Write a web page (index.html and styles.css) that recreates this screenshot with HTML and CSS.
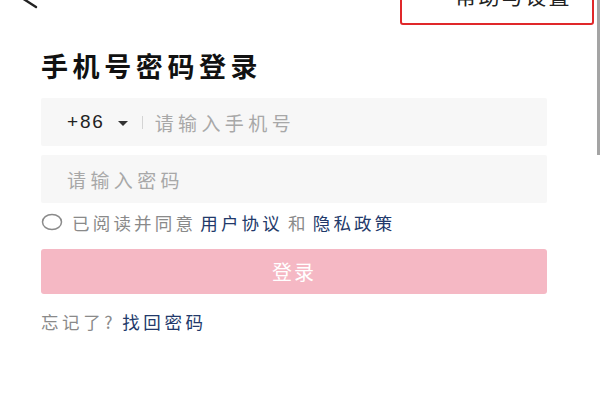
FILE: index.html
```html
<!DOCTYPE html>
<html lang="zh-CN">
<head>
    <meta charset="UTF-8">
    <meta name="viewport" content="width=device-width, initial-scale=1.0">
    <title>手机号密码登录</title>
    <link rel="stylesheet" href="styles.css">
</head>
<body>

<header class="top-bar">
    <!-- back arrow, mostly above the fold -->
    <svg class="back" width="20" height="30" viewBox="0 0 20 30">
        <polyline points="17,10 3,19 17,28" fill="none" stroke="#222" stroke-width="2.4" stroke-linecap="round" stroke-linejoin="round"/>
    </svg>
    <div class="help-box">帮助与设置</div>
</header>

<main class="login">
    <h1 class="title">手机号密码登录</h1>

    <div class="field">
        <span class="area-code">+86</span>
        <span class="caret"></span>
        <span class="divider"></span>
        <span class="placeholder">请输入手机号</span>
    </div>

    <div class="field">
        <span class="placeholder">请输入密码</span>
    </div>

    <div class="agree">
        <svg class="check" width="22" height="18" viewBox="0 0 22 18">
            <ellipse cx="11" cy="9" rx="9.5" ry="7.5" fill="none" stroke="#8a8a8a" stroke-width="1.5"/>
        </svg>
        <span class="muted">已阅读并同意</span>
        <a href="#" class="link">用户协议</a>
        <span class="muted">和</span>
        <a href="#" class="link">隐私政策</a>
    </div>

    <button class="login-btn">登录</button>

    <div class="forgot">
        <span class="muted">忘记了?</span>
        <a href="#" class="link">找回密码</a>
    </div>
</main>

<div class="scroll-thumb"></div>

</body>
</html>
```

FILE: styles.css
```css
body {
    margin: 0;
    background-color: #fff;
    font-family: "Noto Sans CJK SC", "Noto Sans", sans-serif;
    color: #111;
    overflow: hidden;
}
.top-bar {
    display: flex;
    justify-content: space-between;
    align-items: flex-start;
    height: 46px;
    margin-top: -21px;
    padding: 0 6px 0 19px;
}
.help-box {
    box-sizing: border-box;
    width: 194px;
    height: 46px;
    border: 2px solid #e0282a;
    border-radius: 3px;
    padding: 4px 20px 0 0;
    text-align: right;
    font-size: 21px;
    line-height: 21px;
    letter-spacing: 2.4px;
    color: #222;
}
.login {
    padding: 0 53px 0 41px;
}
.title {
    margin: 25px 0 16px 0;
    font-size: 27px;
    line-height: 32px;
    letter-spacing: 4.6px;
    font-weight: bold;
    color: #111;
}
.field {
    display: flex;
    align-items: center;
    height: 48px;
    margin-bottom: 9px;
    padding-left: 26px;
    background-color: #f7f7f7;
    border-radius: 2px;
}
.area-code {
    font-family: "Liberation Sans", Arial, sans-serif;
    font-size: 19px;
    letter-spacing: 1.8px;
    color: #222;
}
.caret {
    width: 0;
    height: 0;
    margin: 2px 0 0 13px;
    border-left: 5.5px solid transparent;
    border-right: 5.5px solid transparent;
    border-top: 5px solid #333;
}
.divider {
    width: 1px;
    height: 13px;
    margin: 0 12px 0 14px;
    background-color: #d4d4d4;
}
.placeholder {
    font-size: 19px;
    letter-spacing: 4.4px;
    color: #a8a8a8;
}
.agree {
    display: flex;
    align-items: center;
    height: 20px;
    margin: 8px 0 17px;
    font-size: 17.5px;
    letter-spacing: 3.2px;
}
.check {
    margin-right: 9px;
}
.muted {
    color: #8a8a8a;
    margin-right: 4px;
}
.link {
    color: #22396a;
    text-decoration: none;
    margin-right: 5px;
}
.login-btn {
    display: block;
    width: 100%;
    height: 45px;
    border: none;
    border-radius: 3px;
    background-color: #f5b8c4;
    color: #fff;
    font-family: "Noto Sans CJK SC", sans-serif;
    font-size: 20px;
    letter-spacing: 2px;
    cursor: pointer;
}
.forgot {
    display: flex;
    align-items: center;
    height: 20px;
    margin-top: 17px;
    font-size: 17.5px;
    letter-spacing: 3.6px;
}
.forgot .muted {
    margin-right: 6px;
}
.scroll-thumb {
    position: absolute;
    top: 0;
    right: 0;
    width: 3px;
    height: 155px;
    background-color: #a4a4a4;
}
```
